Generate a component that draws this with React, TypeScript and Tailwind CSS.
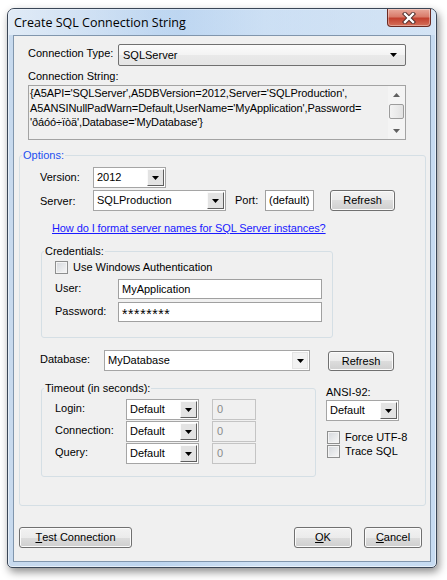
import React from "react";

const FONT = "font-['Liberation_Sans',Arial,sans-serif]";

function Tri({ up }: { up?: boolean }) {
  return (
    <svg width="7" height="4" viewBox="0 0 7 4">
      <polygon points={up ? "0,4 7,4 3.5,0" : "0,0 7,0 3.5,4"} fill="#000" />
    </svg>
  );
}

function Combo({ value, className, light }: { value: string; className: string; light?: boolean }) {
  return (
    <div className={`flex border border-[#a5a5a5] bg-white ${className}`}>
      <div className="flex flex-1 items-center pl-[3px] text-[11px] text-black">{value}</div>
      <div
        className={
          light
            ? "m-[1px] flex w-[16px] items-center justify-center border border-[#e4e4e4] bg-[#f2f2f2]"
            : "m-[1px] flex w-[17px] items-center justify-center border border-[#fafafa] border-r-[#5e5e5e] border-b-[#5e5e5e] bg-[#e3e3e3]"
        }
      >
        <Tri />
      </div>
    </div>
  );
}

function TextBox({ value, className, disabled }: { value: React.ReactNode; className: string; disabled?: boolean }) {
  return (
    <div
      className={
        disabled
          ? `flex items-center border border-[#c4c4c4] bg-[#f0f0f0] pl-[4px] text-[11px] text-[#8a8a8a] ${className}`
          : `flex items-center border border-[#a0a0a0] bg-white pl-[3px] text-[11px] text-black ${className}`
      }
    >
      {value}
    </div>
  );
}

function Button({ children, className }: { children: React.ReactNode; className: string }) {
  return (
    <button
      type="button"
      className={`flex items-center justify-center rounded-[3px] border border-[#707070] bg-[linear-gradient(to_bottom,#f2f2f2_0%,#ebebeb_50%,#dddddd_50%,#cfcfcf_100%)] text-[11px] text-black shadow-[inset_0_0_0_1px_#fbfbfb] ${className}`}
    >
      {children}
    </button>
  );
}

function Check({ label }: { label: string }) {
  return (
    <div className="flex items-center">
      <div className="h-[13px] w-[13px] border border-[#8e8f8f] bg-[linear-gradient(135deg,#d4d7dc,#f7f7f7)] shadow-[inset_0_0_0_1px_#f4f4f4]" />
      <span className="ml-[5px] text-[11px] leading-[13px]">{label}</span>
    </div>
  );
}

function CloseButton() {
  return (
    <div className="flex h-[18px] w-[44px] items-center justify-center rounded-b-[4px] border border-t-0 border-[#6b2a22] bg-[linear-gradient(to_bottom,#e9a99b_0%,#d97c6b_45%,#c3412f_55%,#d4705a_100%)] shadow-[inset_0_0_0_1px_rgba(255,255,255,0.35)]">
      <svg width="14" height="12" viewBox="0 0 14 12">
        <path d="M3 2 L11 10 M11 2 L3 10" stroke="#4a2a28" strokeWidth="4.2" strokeLinecap="square" />
        <path d="M3 2 L11 10 M11 2 L3 10" stroke="#ffffff" strokeWidth="2.4" strokeLinecap="square" />
      </svg>
    </div>
  );
}

export default function App() {
  return (
    <div className={`h-[580px] w-[447px] bg-white pl-[7px] pt-[8px] ${FONT}`}>
      <div className="flex h-[560px] w-[430px] flex-col rounded-t-[7px] rounded-b-[5px] border border-[#3a4656] bg-[linear-gradient(to_right,#c8daee_0%,#bdd5ef_35%,#cfe1f4_60%,#c6dbf1_100%)] shadow-[inset_0_0_0_1px_rgba(255,255,255,0.55),2px_4px_9px_rgba(0,0,0,0.45)]">
        {/* title bar */}
        <div className="flex h-[26px] items-start rounded-t-[6px] bg-[linear-gradient(to_right,rgba(235,242,250,0.7),rgba(185,212,242,0.4)_40%,rgba(225,236,248,0.5))]">
          <span className="ml-[6px] mt-[6px] text-[12.5px] leading-[16px] text-black font-['Open_Sans','Noto_Sans',sans-serif]">
            Create SQL Connection String
          </span>
          <div className="ml-auto mr-[5px]">
            <CloseButton />
          </div>
        </div>

        {/* client area */}
        <div className="mx-[5px] flex h-[527px] flex-col border border-[#8196ad] bg-[#f0f0f0] text-[11px] text-black">
          <div className="ml-[14px] mt-[8px] flex h-[22px] items-center">
            <span className="w-[90px] pb-[3px]">Connection Type:</span>
            <div className="flex h-[22px] w-[288px] items-center rounded-[2px] border border-[#707070] bg-[linear-gradient(to_bottom,#fbfbfb_0%,#f3f3f3_50%,#e9e9e9_50%,#e5e5e5_100%)] pl-[4px] pr-[8px]">
              <span className="flex-1">SQLServer</span>
              <Tri />
            </div>
          </div>
          <div className="ml-[14px] mt-[3px] h-[14px] leading-[14px]">Connection String:</div>
          <div className="ml-[14px] mt-[2px] flex h-[55px] w-[378px] border border-[#a3a3a3] bg-[#f0f0f0]">
            <div className="flex-1 pl-[1px] leading-[14.5px] tracking-[-0.1px]">
              <div>{"{A5API='SQLServer',A5DBVersion=2012,Server='SQLProduction',"}</div>
              <div>{"A5ANSINullPadWarn=Default,UserName='MyApplication',Password="}</div>
              <div>{"'ðáóó÷ïòä',Database='MyDatabase'}"}</div>
            </div>
            <div className="flex w-[17px] flex-col bg-[#f4f4f4]">
              <div className="flex h-[18px] items-center justify-center">
                <svg width="7" height="4" viewBox="0 0 7 4"><polygon points="0,4 7,4 3.5,0" fill="#606060" /></svg>
              </div>
              <div className="mx-[1px] h-[15px] rounded-[2px] border border-[#9c9c9c] bg-[linear-gradient(to_right,#f3f3f3,#e2e2e2)]" />
              <div className="flex-1" />
              <div className="flex h-[17px] items-center justify-center">
                <svg width="7" height="4" viewBox="0 0 7 4"><polygon points="0,0 7,0 3.5,4" fill="#606060" /></svg>
              </div>
            </div>
          </div>

          {/* Options */}
          <fieldset className="ml-[5px] mt-[8px] h-[358px] w-[407px] rounded-[3px] border border-[#d5dfe5]">
            <legend className="ml-[2px] px-[1px] leading-[14px] text-[#1c4ff0]">Options:</legend>
            <div className="ml-[20px] mt-[5px] flex h-[21px]">
              <span className="w-[53px] pt-[2px]">Version:</span>
              <Combo value="2012" className="h-[21px] w-[73px]" />
            </div>
            <div className="ml-[20px] mt-[2px] flex h-[21px] items-start">
              <span className="w-[53px] pt-[3px]">Server:</span>
              <Combo value="SQLProduction" className="h-[21px] w-[133px]" />
              <span className="ml-[9px] w-[30px] pt-[2px]">Port:</span>
              <TextBox value="(default)" className="h-[21px] w-[49px]" />
              <Button className="ml-[16px] h-[21px] w-[65px]">Refresh</Button>
            </div>
            <div className="ml-[32px] mt-[10px] h-[14px] leading-[14px] tracking-[-0.1px] text-[#1a1aff] underline">
              How do I format server names for SQL Server instances?
            </div>

            {/* Credentials */}
            <fieldset className="ml-[21px] mt-[9px] h-[94px] w-[292px] rounded-[3px] border border-[#d5dfe5]">
              <legend className="ml-[2px] px-[1px] leading-[14px]">Credentials:</legend>
              <div className="ml-[13px] mt-[3px]">
                <Check label="Use Windows Authentication" />
              </div>
              <div className="ml-[13px] mt-[5px] flex h-[20px]">
                <span className="w-[63px] pt-[1px]">User:</span>
                <TextBox value="MyApplication" className="h-[20px] w-[204px]" />
              </div>
              <div className="ml-[13px] mt-[3px] flex h-[20px]">
                <span className="w-[63px] pt-[1px]">Password:</span>
                <TextBox
                  value={<span className="pt-[3px] text-[14px] leading-[14px] tracking-[0.6px]">********</span>}
                  className="h-[20px] w-[204px]"
                />
              </div>
            </fieldset>

            <div className="ml-[20px] mt-[12px] flex h-[21px] items-start">
              <span className="w-[64px] pt-[1px]">Database:</span>
              <Combo value="MyDatabase" className="h-[21px] w-[206px]" light />
              <Button className="ml-[18px] mt-[1px] h-[20px] w-[66px]">Refresh</Button>
            </div>

            <div className="flex items-start">
              {/* Timeout */}
              <fieldset className="ml-[21px] mt-[10px] h-[96px] w-[275px] rounded-[3px] border border-[#d5dfe5]">
                <legend className="ml-[2px] px-[1px] leading-[14px]">Timeout (in seconds):</legend>
                <div className="ml-[13px] mt-[4px] flex flex-col gap-[1px]">
                  {["Login:", "Connection:", "Query:"].map((l) => (
                    <div key={l} className="flex h-[21px]">
                      <span className="w-[71px] pt-[1px]">{l}</span>
                      <Combo value="Default" className="h-[21px] w-[73px]" />
                      <TextBox value="0" className="ml-[13px] h-[21px] w-[44px]" disabled />
                    </div>
                  ))}
                </div>
              </fieldset>
              <div className="ml-[10px] mt-[14px] flex flex-col">
                <span className="h-[14px] leading-[14px]">ANSI-92:</span>
                <Combo value="Default" className="mt-[1px] h-[21px] w-[73px]" />
                <div className="ml-[1px] mt-[10px] flex flex-col gap-[1px]">
                  <Check label="Force UTF-8" />
                  <Check label="Trace SQL" />
                </div>
              </div>
            </div>
          </fieldset>

          <div className="mt-[21px] flex h-[21px]">
            <Button className="ml-[5px] h-[21px] w-[113px]">
              <span className="underline">T</span>est Connection
            </Button>
            <Button className="ml-auto h-[21px] w-[58px]">
              <span className="underline">O</span>K
            </Button>
            <Button className="ml-[12px] mr-[8px] h-[21px] w-[58px]">
              <span className="underline">C</span>ancel
            </Button>
          </div>
        </div>
      </div>
    </div>
  );
}
